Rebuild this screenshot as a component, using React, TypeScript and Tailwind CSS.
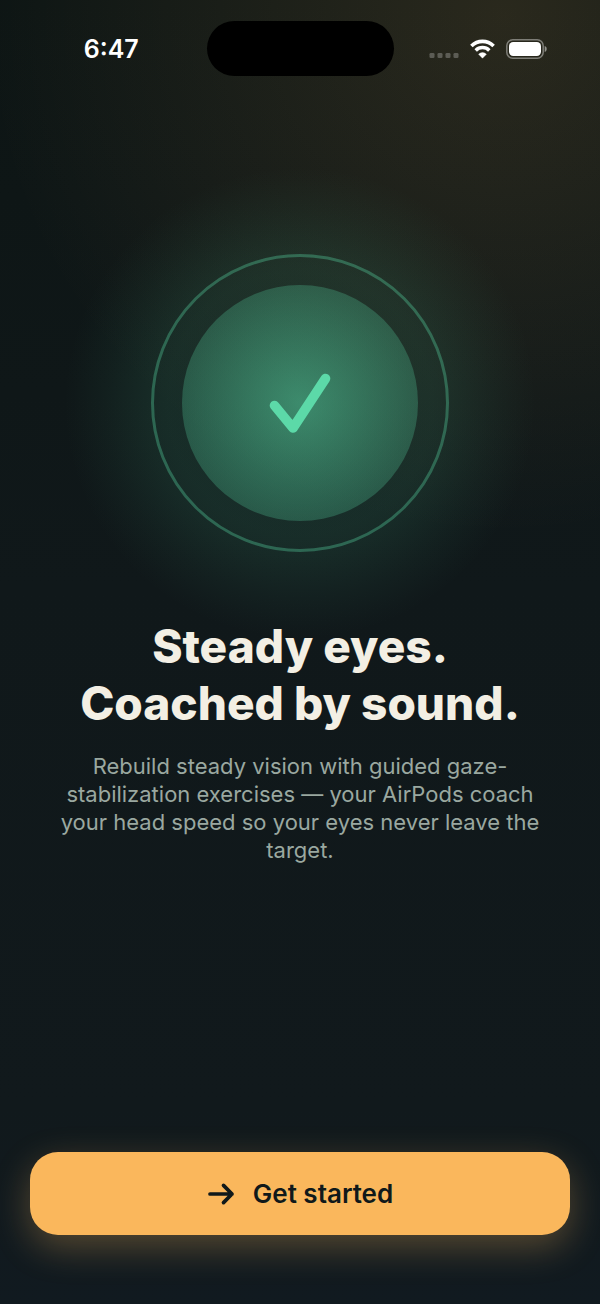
function StatusBar() {
  return (
    <header className="grid grid-cols-[1fr_187px_1fr] items-center pt-[21px]">
      <div className="pl-4 text-center text-[25px] leading-8 font-semibold text-white">
        6:47
      </div>
      <div className="h-[55px] rounded-full bg-black" />
      <div className="flex items-center justify-center gap-[11px] pr-[18px]">
        {/* No signal */}
        <svg width="30" height="20" viewBox="0 0 30 20" fill="#fff" fillOpacity="0.25">
          <rect x="0.5" y="14" width="5" height="5" rx="1.3" />
          <rect x="8.5" y="14" width="5" height="5" rx="1.3" />
          <rect x="16.5" y="14" width="5" height="5" rx="1.3" />
          <rect x="24.5" y="14" width="5" height="5" rx="1.3" />
        </svg>
        <svg width="25" height="20" viewBox="0 0 25 20" fill="none" stroke="#fff">
          <path d="M1.4 7a15.7 15.7 0 0 1 22.2 0" strokeWidth="3.6" />
          <path d="M5.7 11.4a9.7 9.7 0 0 1 13.6 0" strokeWidth="3.5" />
          <path
            d="M12.5 19.2 8.6 15.2a5.6 5.6 0 0 1 7.8 0Z"
            fill="#fff"
            stroke="#fff"
            strokeWidth="0.4"
            strokeLinejoin="round"
          />
        </svg>
        <svg width="41" height="20" viewBox="0 0 41 20">
          <rect
            x="0.8"
            y="0.8"
            width="36.4"
            height="18.4"
            rx="6"
            fill="none"
            stroke="#fff"
            strokeOpacity="0.4"
            strokeWidth="1.5"
          />
          <rect x="3" y="3" width="32" height="14" rx="4.2" fill="#fff" />
          <path d="M38.7 7c1.4.4 2 1.6 2 3s-.6 2.6-2 3Z" fill="#fff" fillOpacity="0.5" />
        </svg>
      </div>
    </header>
  );
}

function Badge() {
  return (
    <div className="relative flex size-[298px] items-center justify-center rounded-full border-3 border-[#59d9a6]/35">
      {/* Soft glow around the ring */}
      <div className="absolute -inset-[90px] rounded-full bg-[radial-gradient(closest-side,rgba(80,190,145,0.13)_0%,rgba(80,190,145,0.13)_56%,rgba(80,190,145,0.11)_65%,rgba(80,190,145,0.05)_82%,rgba(80,190,145,0.01)_95%,rgba(80,190,145,0)_100%)]" />
      <div className="relative flex size-[236px] items-center justify-center rounded-full bg-[radial-gradient(closest-side,rgba(89,217,166,0.54),rgba(89,217,166,0.26))]">
        <svg
          width="62"
          height="60"
          viewBox="0 0 62 60"
          fill="none"
          stroke="#5cd9a8"
          strokeWidth="9.6"
          strokeLinecap="round"
          strokeLinejoin="round"
        >
          <path d="M5.5 32.5 24 55 56.5 5.5" />
        </svg>
      </div>
    </div>
  );
}

function Arrow() {
  return (
    <svg
      width="28"
      height="24"
      viewBox="0 0 28 24"
      fill="none"
      stroke="currentColor"
      strokeWidth="3.7"
      strokeLinecap="round"
      strokeLinejoin="round"
    >
      <path d="M3 12h22M16.5 3.4 25 12l-8.5 8.6" />
    </svg>
  );
}

export default function App() {
  return (
    <div className="flex min-h-screen flex-col overflow-hidden bg-[radial-gradient(circle_520px_at_84%_16px,rgba(250,183,92,0.12),rgba(250,183,92,0)),linear-gradient(to_bottom,#0d1514,#10181a_45%,#11191c_85%,#111a20)] font-['Inter',sans-serif]">
      <StatusBar />

      <main className="flex flex-1 flex-col items-center px-[52px] pt-[178px] text-center">
        <Badge />
        <h1 className="relative mt-[66px] text-[46px] leading-[57px] font-extrabold whitespace-nowrap text-[#f3efe4]">
          Steady eyes.
          <br />
          Coached by sound.
        </h1>
        <p className="mt-5 text-[22px] leading-7 text-[#9aa8a0]">
          Rebuild steady vision with guided gaze-stabilization exercises — your
          AirPods coach your head speed so your eyes never leave the target.
        </p>
      </main>

      <footer className="px-[30px] pb-[69px]">
        <button
          type="button"
          className="flex h-[83px] w-full items-center justify-center gap-[18px] rounded-[28px] bg-[#fab75c] text-[26px] font-semibold text-[#10191a] shadow-[0_12px_36px_rgba(250,183,92,0.3)]"
        >
          <Arrow />
          Get started
        </button>
      </footer>
    </div>
  );
}
